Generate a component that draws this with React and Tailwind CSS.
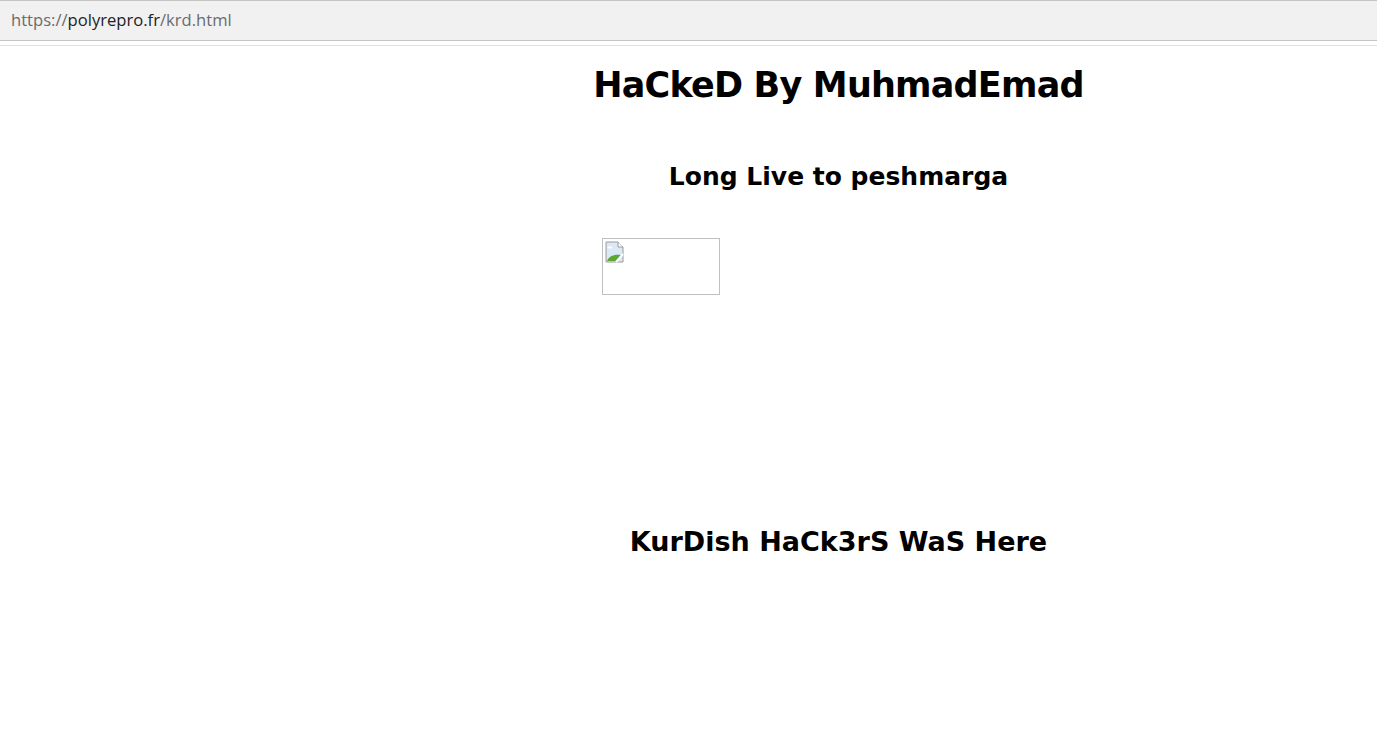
import React from 'react';

const comic = { fontFamily: '"DejaVu Sans", "Liberation Sans", sans-serif' };

function AddressBar() {
  return (
    <div className="h-[47px] bg-white">
      <div className="h-[41px] bg-[#f1f1f1] border-t border-b border-[#c4c4c4] flex items-center pl-[11px]">
        <span
          className="text-[16.6px]"
          style={{ fontFamily: '"Open Sans", "Noto Sans", sans-serif' }}
        >
          <span className="text-[#6b6b6b]">https://</span>
          <span className="text-[#222]">polyrepro.fr</span>
          <span className="text-[#6b6b6b]">/krd.html</span>
        </span>
      </div>
      <div className="h-[5px] border-b border-[#e2e2e2]" />
    </div>
  );
}

function BrokenImage() {
  return (
    <div className="w-[118px] h-[57px] border border-[#c0c0c0] p-[2px]">
      <svg width="20" height="22" viewBox="0 0 20 22">
        <path d="M1 1h12l5 5v15H1z" fill="#dbe8f6" stroke="#9a9a9a" />
        <path d="M13 1v5h5" fill="#fff" stroke="#9a9a9a" />
        <path d="M2 20c2-5 7-7 14-6l-4 6z" fill="#5aa832" />
        <path d="M3 7c1-1 3-1 4 0" stroke="#fff" strokeWidth="2" fill="none" />
        <path d="M11 21l7-8" stroke="#fff" strokeWidth="2" />
      </svg>
    </div>
  );
}

export default function App() {
  return (
    <div className="min-h-[747px] bg-white text-black">
      <AddressBar />
      <div className="pl-[300px] flex flex-col items-center" style={comic}>
        <h1 className="mt-[13px] text-[35px] leading-[50px] font-bold whitespace-nowrap tracking-[-0.8px]">
          HaCkeD By MuhmadEmad
        </h1>
        <h2 className="mt-[50px] text-[25px] leading-[34px] font-bold whitespace-nowrap">
          Long Live to peshmarga
        </h2>
        <div className="w-[474px] mt-[44px]">
          <BrokenImage />
        </div>
        <h2 className="mt-[230px] text-[27px] leading-[34px] font-bold whitespace-nowrap">
          KurDish HaCk3rS WaS Here
        </h2>
      </div>
    </div>
  );
}
